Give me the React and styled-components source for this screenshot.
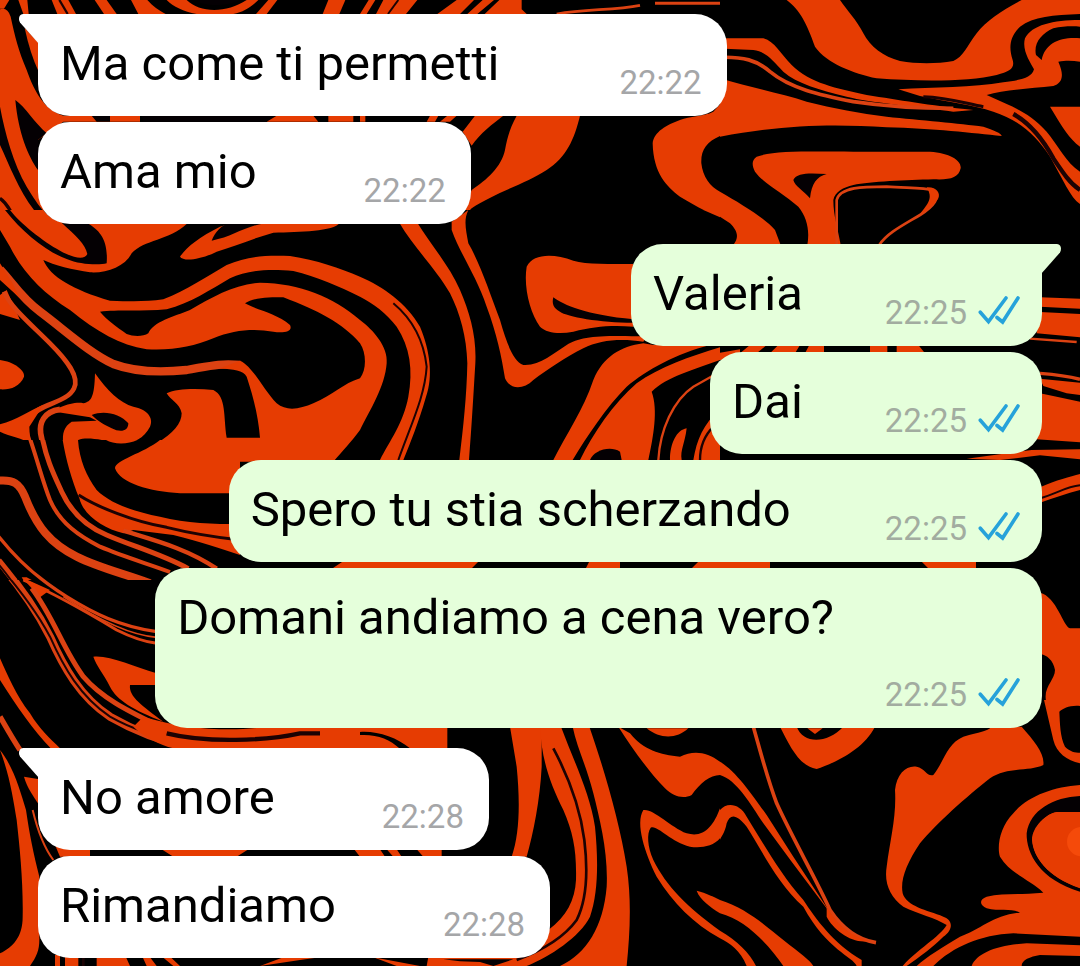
import React from "react";
import styled, { createGlobalStyle } from "styled-components";

const GlobalStyle = createGlobalStyle`
  *, *::before, *::after { box-sizing: border-box; }
  body {
    margin: 0;
    background: #000;
    font-family: Roboto, "Liberation Sans", sans-serif;
  }
`;

const Page = styled.main`
  display: grid;
  grid-template-columns: minmax(0, 1fr);
  min-height: 100vh;
  overflow: hidden;
`;

const WallpaperArt = styled.svg`
  grid-area: 1 / 1;
  display: block;
  width: 100%;
  height: 100%;
  background: #000;
  .o { fill: #e63c02; }
  .k { fill: #040003; }
  .lo { fill: none; stroke: #dc4212; }
  .lk { fill: none; stroke: #1c0203; }
`;

const Thread = styled.ol`
  grid-area: 1 / 1;
  z-index: 1;
  list-style: none;
  margin: 0;
  padding: 14px 38px 8px;
  display: flex;
  flex-direction: column;
  gap: 20px;
`;

const Group = styled.li`
  display: flex;
  flex-direction: column;
  align-items: ${(p) => (p.$out ? "flex-end" : "flex-start")};
  gap: 6px;
`;

const Bubble = styled.article`
  position: relative;
  display: flex;
  flex-direction: ${(p) => (p.$stacked ? "column" : "row")};
  align-items: flex-end;
  gap: ${(p) => (p.$stacked ? 0 : p.$gap)}px;
  max-width: 100%;
  padding: 21px ${(p) => (p.$out ? 22 : 25)}px 13px 22px;
  border-radius: 32px;
  border-top-left-radius: ${(p) => (p.$tail && !p.$out ? 0 : 32)}px;
  border-top-right-radius: ${(p) => (p.$tail && p.$out ? 0 : 32)}px;
  background: ${(p) => (p.$out ? "#e5ffdb" : "#fff")};
  color: ${(p) => (p.$out ? "#a2aca0" : "#a5a6a8")};
`;

const Text = styled.p`
  margin: 0;
  padding: 0 ${(p) => (p.$stacked ? 186 : 0)}px ${(p) => (p.$stacked ? 28 : 10)}px 0;
  font-size: 49px;
  line-height: 58px;
  color: #000;
`;

const Meta = styled.span`
  display: flex;
  align-items: center;
  gap: 11px;
  height: 40px;
`;

const Time = styled.time`
  font-size: 33px;
  line-height: 40px;
`;

const TailSvg = styled.svg`
  position: absolute;
  top: 0;
  left: ${(p) => (p.$out ? "auto" : "-19px")};
  right: ${(p) => (p.$out ? "-19px" : "auto")};
  transform: ${(p) => (p.$out ? "scaleX(-1)" : "none")};
  fill: ${(p) => (p.$out ? "#e5ffdb" : "#fff")};
`;

const TicksSvg = styled.svg`
  display: block;
  fill: none;
  stroke: #26a2da;
  stroke-width: 3.6;
  stroke-linecap: round;
`;

function Tail({ out }) {
  return (
    <TailSvg $out={out} width="20" height="30" viewBox="0 0 20 30" aria-hidden="true">
      <path d="M4 0H20V30L1 8.5C-1 5 0 0 4 0Z" />
    </TailSvg>
  );
}

function Ticks() {
  return (
    <TicksSvg width="42" height="34" viewBox="0 1 42 34" role="img" aria-label="Letto">
      <path d="M2.3 17.2L10.5 26.6L28 3" />
      <path d="M19 22.5L24.6 27L40 3" />
    </TicksSvg>
  );
}

/* One tile of the wallpaper, drawn at three units to the pixel. */
function Patch({ x, y, w, h, from = 0, children }) {
  return (
    <svg x={x} y={y} width={w} height={h} viewBox={`0 ${from} ${w * 3} ${h * 3}`}>
      {children}
    </svg>
  );
}

const O = ({ d }) => <path className="o" d={d} />;
const K = ({ d }) => <path className="k" d={d} />;
const LO = ({ d, w }) => <path className="lo" d={d} strokeWidth={w} />;
const LK = ({ d, w }) => <path className="lk" d={d} strokeWidth={w} />;

function Wallpaper() {
  return (
    <WallpaperArt viewBox="0 0 1080 966" preserveAspectRatio="xMidYMid slice" aria-hidden="true">
      <Patch x={0} y={0} w={360} h={210}>
        <O d="M0 28Q22 20 32 50C45 110 55 150 80 210C105 280 135 330 190 347H420V365H190L114 420V510L180 670H0V440L0 320Z" />
        <K d="M0 320C15 400 40 490 80 560C110 610 120 620 145 650L110 640C60 580 30 500 0 435Z" />
        <K d="M46 300C75 320 105 370 140 400L114 420V510C85 470 55 400 46 300Z" />
        <LK d="M0 595C15 605 25 620 35 640" w={10} />
        <LK d="M20 0L0 24" w={10} />
        <O d="M0 0H28L12 26H0Z" />
        <O d="M74 84L116 128V215Q90 160 74 84Z" />
        <O d="M55 0H82L86 42H70Z" />
        <O d="M155 0H205L228 42H172Z" />
        <LK d="M178 0L203 42" w={7} />
        <O d="M284 0H320L350 42H312Z" />
        <O d="M393 0H442C460 20 475 30 497 42H415Z" />
        <O d="M500 0H560C600 40 680 40 740 0H775C750 25 730 35 700 42H590C550 35 520 20 500 0Z" />
        <K d="M600 8C640 20 680 18 720 0H600Z" />
        <O d="M805 0H832L800 42H768Z" />
        <O d="M985 0H1036L1018 42H968Z" />
        <K d="M275 347H330V365H290Z" />
        <K d="M425 347H830L800 365H430Z" />
        <O d="M830 347H940L955 365H800Z M985 347H1060V365H985Z" />
      </Patch>

      <Patch x={360} y={0} w={360} h={210}>
        <O d="M26 0H46L20 42H0Z M70 0H172L138 42H48Z M290 0H342L300 42H232Z M368 0H402L352 42H322Z M418 0H485V28L500 42H374Z" />
        <LK d="M115 0L84 42" w={6} />
        <LO d="M590 42C680 26 760 32 840 16" w={8} />
        <LO d="M885 10H1080" w={9} />
        <O d="M0 347H16V365H0Z M210 347H235L225 365H200Z M262 347H290L270 365H240Z" />
        <O d="M345 347H430C400 370 360 400 335 437L308 395Z" />
        <O d="M470 347H660C642 420 620 470 560 510C500 550 400 580 335 625L300 660L335 570C380 540 425 500 435 450C442 410 452 380 470 347Z" />
        <O d="M1080 313L1060 335C1030 350 990 348 960 360C920 375 882 395 878 430C880 520 920 560 960 590C1010 620 1050 640 1080 655V575C1050 560 1028 530 1024 490C1022 450 1040 425 1080 408Z" />
      </Patch>

      <Patch x={720} y={0} w={360} h={360}>
        <O d="M15 115H130C165 125 180 160 215 195C270 250 350 265 440 285C540 300 620 315 760 330L700 335C600 320 450 308 380 290C300 270 230 250 190 215C160 185 140 155 100 150L15 146Z" />
        <LO d="M0 172C70 170 110 180 150 215C210 265 300 285 400 305C500 320 600 325 700 325" w={11} />
        <O d="M200 0C240 30 260 70 285 140C320 190 400 220 470 235C600 245 750 245 830 225C870 215 885 205 878 180C865 140 870 110 900 80C940 50 1000 45 1080 42V0H905C850 30 800 60 770 100C740 140 730 170 700 183C650 192 590 192 540 183C490 170 450 140 430 100C410 60 380 30 360 0Z" />
        <O d="M1080 60C1000 60 935 75 915 115C905 150 930 185 942 208C935 235 900 240 850 247C760 262 640 262 535 268L600 288C680 305 760 315 820 335C900 360 950 410 990 470C1030 540 1050 590 1080 612V515C1040 490 1010 430 980 395C940 350 900 330 860 312L800 285C850 270 930 265 1000 258C1025 250 1035 230 1015 185C1040 180 1060 182 1080 185V115C1020 110 975 130 965 180L948 165C940 130 965 100 1000 85C1030 78 1060 78 1080 80Z" />
        <LK d="M880 342C930 370 970 420 1000 475C1030 520 1050 550 1080 570" w={13} />
        <LK d="M610 290C680 292 730 308 790 320" w={9} />
        <O d="M990 320H1080V440C1050 420 1020 370 1005 345Z" />
        <O d="M0 235C90 262 180 280 260 305C340 325 420 340 500 350C600 360 720 370 790 380C820 390 845 400 845 408C760 400 640 385 500 382C350 372 200 372 0 410Z" />
        <O d="M110 470C160 452 250 455 400 455H630C690 460 725 480 722 505C715 535 690 540 640 538C560 540 450 545 400 555C370 562 345 575 340 600C340 650 355 690 362 735H262C270 690 260 650 235 620C190 580 130 550 105 515C95 495 95 480 110 470Z" />
        <K d="M220 540C230 515 280 520 320 522C290 530 275 550 270 595C250 570 225 560 220 540Z" />
        <LO d="M350 735V600C360 560 430 560 500 560C560 565 610 560 640 572C665 590 640 620 600 645C550 675 500 700 478 735" w={8} />
        <O d="M620 562C650 560 662 580 655 595C645 610 625 630 600 642C625 610 640 595 620 562Z" />
        <O d="M0 575C60 610 130 650 165 690L182 735H40C60 710 50 690 30 670L0 650Z" />
        <O d="M960 892L1080 896V926L960 920Z M960 936L1080 942V1012L950 1000Z" />
        <LO d="M930 1016L1070 1026" w={7} />
        <O d="M90 1035H140L110 1060H60Z M175 1035H240L225 1060H150Z M268 1035H312V1060H255Z M450 1035H502V1060H450Z M530 1035H595L615 1060H530Z" />
        <O d="M0 1058L60 1048V1080H0Z" />
      </Patch>

      <Patch x={0} y={210} w={360} h={290}>
        <O d="M0 0H130C160 40 200 42 250 42H560C510 90 430 90 395 130C375 170 320 190 270 187C220 180 160 165 130 150C150 200 220 240 330 272C400 275 440 275 490 268C560 240 620 200 680 165C740 140 790 135 870 138C950 150 1020 175 1080 200V260C1020 230 950 200 880 183C800 175 740 182 690 205C630 240 570 280 500 298C430 305 350 298 300 305C320 330 350 350 380 372C400 380 430 380 445 370C460 335 520 320 570 300C640 260 700 225 780 218C900 220 1000 260 1080 330V400C1030 340 950 300 850 262C810 262 760 262 735 280C770 300 830 310 870 345C880 365 850 370 820 365C760 355 700 360 640 385C580 410 520 422 440 418C360 405 290 365 210 300C130 250 70 190 30 110L0 60Z" />
        <K d="M185 38H260C300 60 325 90 320 160C300 165 240 165 200 147C140 125 70 70 15 0L30 0C60 40 130 95 180 122C220 145 255 150 262 132C255 100 230 80 185 38Z" />
        <LO d="M0 178C40 220 60 260 120 305C200 365 270 430 340 462C400 485 480 488 560 480C620 470 660 458 720 465" w={25} />
        <O d="M0 160L35 215L60 265L0 210Z M0 255L20 240L60 330L0 312Z" />
        <LO d="M12 245C30 290 90 340 150 400C200 450 240 500 222 535C200 580 120 580 92 620C70 650 80 670 90 700" w={14} />
        <O d="M0 450C40 455 75 480 72 500C60 530 30 540 0 538Z" />
        <O d="M0 643C50 630 90 600 130 585L88 650L90 700C70 685 30 680 0 665Z" />
        <O d="M285 490C320 540 360 580 400 590C450 600 460 630 450 650C430 690 390 705 350 700C310 690 260 680 235 690L233 700H190C186 670 192 650 215 635L290 632L270 622L170 606C150 600 220 572 250 580C275 575 283 560 285 490Z" />
        <LO d="M180 598C130 605 118 640 122 670L128 700" w={17} />
        <K d="M275 615C310 600 360 610 385 640C385 665 360 668 335 655C315 645 295 635 275 615Z" />
        <O d="M500 550C530 535 590 535 640 540C680 560 670 620 680 683H780C775 620 760 560 740 500C730 480 700 480 660 475L720 452C760 470 790 540 830 580C860 605 900 597 940 580C1000 555 1030 520 1080 505V660C1050 700 1030 720 1000 755H690V850H540C450 845 370 820 340 770C360 750 420 730 470 700C520 670 545 640 545 610C540 580 510 570 500 550Z" />
        <O d="M540 140C560 110 600 80 660 50L700 38H1020C1000 65 900 65 820 68C760 85 700 110 650 125C600 150 550 155 540 140Z" />
        <K d="M635 92C645 65 665 45 690 38H800C730 50 700 80 635 92Z" />
      </Patch>

      <Patch x={360} y={210} w={360} h={260}>
        <O d="M118 38H172C210 100 270 170 300 240C330 310 350 380 346 460C340 560 335 650 327 750H298C310 650 320 560 322 460C320 380 300 310 270 250C230 180 160 110 118 38Z" />
        <O d="M275 35L325 0C310 30 318 60 325 100C360 160 390 250 420 330C440 400 460 455 490 465C540 468 580 430 620 405C660 380 720 375 860 380L850 395C780 385 720 390 670 415C620 440 560 480 520 510C490 540 450 540 435 505C425 440 410 370 380 290C350 200 300 130 275 60Z" />
        <O d="M500 170C520 130 580 130 640 152C680 165 750 160 820 162V350C750 345 700 350 640 365C600 372 560 370 540 350C510 310 490 230 500 170Z" />
        <K d="M580 262C610 285 680 315 820 328V338C720 338 620 320 600 305C580 295 575 280 580 262Z" />
        <O d="M0 200C70 230 140 280 180 350C210 420 220 500 198 560C175 640 150 700 130 750H60C90 690 130 640 145 560C160 480 150 410 110 350C80 310 40 280 0 260Z" />
        <LK d="M100 280C160 330 192 400 200 470C195 560 150 650 115 750" w={6} />
        <O d="M0 330C40 360 85 410 80 460C75 530 30 600 0 660V505C20 480 20 430 0 400Z" />
        <O d="M580 750C620 670 670 600 700 510C730 440 780 410 850 400L880 405H1050C950 430 860 480 800 530C740 590 680 680 638 750Z" />
        <O d="M660 750C700 670 760 580 830 520C900 470 990 440 1080 412V450C1000 480 920 500 875 545C895 600 880 680 865 750Z" />
        <K d="M690 750C700 722 750 705 780 725L785 750Z" />
        <LO d="M895 750C900 660 940 570 1000 530L1080 485" w={7} />
        <O d="M930 750C930 700 950 660 980 655C975 700 960 720 965 750Z M1000 750C1010 690 1030 640 1080 600V750Z" />
        <LK d="M1020 750C1020 710 1030 680 1060 650" w={7} />
        <O d="M1030 0H1080V22Z" />
      </Patch>

      <Patch x={0} y={500} w={360} h={466}>
        <LO d="M200 0C240 60 300 90 380 120C450 145 500 160 570 205" w={15} />
        <O d="M500 65C580 75 650 75 700 72V165C640 150 560 110 500 100Z" />
        <LO d="M0 115C60 190 120 240 200 290C280 340 360 380 470 395" w={10} />
        <LO d="M70 240C150 275 250 330 350 390C400 415 430 425 470 430" w={9} />
        <LO d="M190 290C280 350 380 405 470 412" w={5} />
        <O d="M65 232L150 270L120 292Z" />
        <LO d="M0 190C60 260 110 330 150 410C190 500 240 590 330 650C400 690 470 720 560 738" w={24} />
        <LK d="M0 200C60 270 110 335 150 410C190 500 240 590 330 650C400 690 470 712 560 725" w={6} />
        <LO d="M95 265C160 350 190 450 250 530C310 600 400 640 490 685" w={15} />
        <O d="M280 470C330 465 400 500 470 520V555H390C385 590 430 620 490 665C400 630 350 600 330 560C310 520 290 500 280 470Z" />
        <O d="M430 650C560 690 700 695 800 680H1080V745H520C480 735 430 710 400 680Z" />
        <LK d="M500 700C620 730 800 722 900 700H960" w={13} />
        <O d="M0 475C20 520 50 590 90 640C120 690 150 715 180 745H152C100 690 50 620 0 540Z" />
        <LO d="M0 650C20 685 40 720 60 750" w={16} />
        <O d="M0 750C30 830 40 900 50 960C60 1050 70 1150 68 1250C68 1310 40 1340 0 1360V1398H90C110 1370 118 1350 118 1320V1130C100 1060 88 1000 78 930C60 870 40 800 0 750Z" />
        <O d="M72 830L118 838V915C100 890 80 860 72 830Z" />
        <LO d="M98 930C110 980 130 1040 160 1080" w={6} />
        <O d="M165 1035L270 1050V1070H180Z M480 1045H750L710 1070H520Z M1060 1045H1080V1070Z" />
        <O d="M165 1365H180V1398H165Z M195 1365H235V1398H195Z M290 1365H375L390 1398H290Z M425 1365H445L470 1398H440Z M480 1365H505L540 1398H520Z M780 1398L850 1372H960L900 1380Z" />
        <LK d="M250 1365V1398" w={8} />
      </Patch>

      <Patch x={0} y={440} w={240} h={140}>
        <rect width="720" height="420" fill="#000" />
        <LO d="M88 -10C115 70 130 130 150 180C180 250 240 290 300 320C370 350 440 370 510 396" w={12} />
        <LO d="M126 -10C140 60 160 100 185 155C215 220 260 260 320 285C400 320 480 340 565 386" w={15} />
        <O d="M188 0H234C238 60 260 110 290 150C330 190 400 215 480 230C560 250 640 252 720 252V345C660 325 600 305 520 285L400 270L370 280C310 265 250 225 238 175C215 120 198 60 188 0Z" />
        <LK d="M236 165C290 200 400 245 500 262C580 282 650 292 720 300" w={9} />
        <LO d="M370 272C460 300 560 325 650 386" w={13} />
        <LO d="M-5 122C40 118 58 130 75 170C110 260 150 310 230 350C300 385 370 400 450 430" w={24} />
        <O d="M480 0C430 40 345 60 345 85C360 130 450 155 540 160H720V0Z M318 0C340 14 385 14 412 0Z" />
        <LO d="M-5 288C40 345 80 385 135 425" w={10} />
        <LO d="M-5 362C10 380 25 400 45 425" w={20} />
        <LK d="M-5 372C10 390 22 405 36 425" w={6} />
        <O d="M65 412L80 412L95 420H70Z" />
      </Patch>

      <Patch x={360} y={700} w={360} h={266}>
        <O d="M0 80H262V145H150C110 112 50 92 0 96Z M0 105C50 102 90 118 118 145H0Z" />
        <O d="M450 80H545V200C540 300 520 400 500 470H455C480 400 480 300 470 200Z" />
        <O d="M540 80H603C640 180 690 280 705 380C715 480 715 580 690 650C660 710 570 770 500 798H200L205 770H480C540 760 560 730 565 690C620 650 645 600 648 540C650 450 640 400 610 330C570 250 545 180 540 80Z" />
        <LK d="M580 145C620 220 660 320 673 420C685 520 680 600 650 660C610 715 550 750 470 780" w={8} />
        <K d="M250 778H460L400 798L360 786L300 784Z" />
        <O d="M638 80H688C730 200 780 370 800 500C815 600 810 700 800 798H600C680 760 730 680 740 560C745 460 720 360 700 280C680 200 650 140 638 80Z" />
        <O d="M775 80L810 100C850 150 900 165 960 170C1000 150 1040 155 1080 185V225C1050 225 1020 250 995 285C970 298 940 290 915 265C870 220 820 150 775 80Z M860 85H985C950 118 900 118 860 85Z" />
        <O d="M850 330C880 325 930 380 980 400C1030 415 1060 380 1080 325V415C1060 440 1020 445 990 440C930 425 890 372 872 383C860 400 862 440 880 480C920 560 980 620 1080 692V715C1000 670 940 610 890 530C855 460 825 370 850 330Z" />
        <O d="M1010 572C1040 580 1060 590 1080 600V640C1050 620 1020 600 1010 572Z" />
        <O d="M0 448H60L75 470H0Z M80 448H110L125 470H100Z M170 448H245V470H190Z M40 772L180 798H110Z" />
      </Patch>

      <Patch x={720} y={700} w={360} h={266}>
        <O d="M0 185C50 215 100 290 140 345L220 470L335 645L215 485L130 370C90 310 50 240 0 225Z" />
        <LO d="M100 80C120 150 140 230 170 310C220 420 290 540 330 630C370 690 420 720 468 728" w={11} />
        <O d="M320 620C350 670 390 710 450 722C400 735 340 690 320 650Z" />
        <O d="M0 330C20 305 60 310 80 350C130 430 180 520 250 600C290 660 340 730 425 780V798H410C400 770 320 750 250 620C170 550 120 440 80 380C50 342 30 340 20 370C15 400 0 415 0 420Z" />
        <O d="M180 80H230C250 132 320 132 370 80H465C430 150 340 190 290 207C240 200 210 140 180 80Z M262 85H308L285 102Z" />
        <O d="M0 600C80 625 140 680 190 720C240 760 270 780 280 798H190C150 740 80 660 0 640Z M0 692C50 720 90 760 108 798H80C60 750 30 730 0 715Z" />
        <O d="M640 225C670 190 680 130 730 110C780 95 800 95 815 80H905C940 120 975 160 970 195C930 215 860 200 810 235C740 290 650 370 600 430C560 490 540 540 548 580C560 620 620 630 670 650C700 660 700 690 670 710C640 740 600 770 560 798H548C590 750 660 710 680 675C650 655 590 640 550 620C510 590 492 550 500 500C510 420 530 350 525 270C530 220 560 195 590 200C615 205 620 230 640 225Z" />
        <O d="M972 0H1080V18C1050 15 1030 25 1018 35C1020 70 1020 110 1035 140C1050 155 1065 158 1080 158V190C1040 180 1010 160 1000 120Z" />
        <O d="M1080 255C1000 260 920 290 880 340C840 380 830 440 840 470C870 520 930 540 970 578C900 585 850 578 800 590C775 600 780 615 800 625C840 635 880 625 900 638C820 645 780 690 720 710C670 740 620 770 590 798H640C700 740 780 705 880 700L1080 710Z" />
        <K d="M1080 288C1000 292 930 330 920 400C918 460 960 540 1080 575V565C980 530 940 470 936 420C936 380 980 340 1010 336H1080Z" />
        <O d="M1010 337H1080V564C980 530 940 470 937 420C940 380 980 340 1010 337Z" />
        <circle cx="1085" cy="425" r="44" fill="#f54a0a" />
        <O d="M755 798C770 760 830 735 920 730L1080 736V768L960 765C930 770 905 780 905 798Z" />
      </Patch>

      <Patch x={960} y={360} w={120} h={340} from={240}>
        <LO d="M240 280C290 284 330 290 360 298" w={10} />
        <O d="M240 296L360 308V345L320 340L250 318Z M240 340L290 350L360 365V487L230 478Z M20 536L215 510L360 508V538L240 526L120 540Z" />
        <O d="M240 622C290 600 330 590 360 582V630C320 640 280 655 240 668Z" />
        <LK d="M240 655C290 640 320 620 360 616" w={6} />
        <O d="M0 845H48V864H0Z M240 938C290 950 310 1040 330 1045H360V1275L300 1290V1262H258C250 1220 285 1200 285 1170C280 1140 260 1125 240 1122Z" />
      </Patch>

      <path className="o" d="M345 560H480L470 570H330ZM590 560H620V570H585ZM700 560H770V570H690ZM920 560H960V570H930Z" />
    </WallpaperArt>
  );
}

const groups = [
  {
    out: false,
    messages: [
      { text: "Ma come ti permetti", time: "22:22", gap: 120 },
      { text: "Ama mio", time: "22:22", gap: 107 },
    ],
  },
  {
    out: true,
    messages: [
      { text: "Valeria", time: "22:25", gap: 82 },
      { text: "Dai", time: "22:25", gap: 82 },
      { text: "Spero tu stia scherzando", time: "22:25", gap: 94 },
      { text: "Domani andiamo a cena vero?", time: "22:25", stacked: true },
    ],
  },
  {
    out: false,
    messages: [
      { text: "No amore", time: "22:28", gap: 107 },
      { text: "Rimandiamo", time: "22:28", gap: 107 },
    ],
  },
];

export default function App() {
  return (
    <Page>
      <GlobalStyle />
      <Wallpaper />
      <Thread>
        {groups.map((group, g) => (
          <Group key={g} $out={group.out}>
            {group.messages.map((m, i) => (
              <Bubble key={m.text} $out={group.out} $tail={i === 0} $stacked={m.stacked} $gap={m.gap}>
                {i === 0 && <Tail out={group.out} />}
                <Text $stacked={m.stacked}>{m.text}</Text>
                <Meta>
                  <Time dateTime={m.time}>{m.time}</Time>
                  {group.out && <Ticks />}
                </Meta>
              </Bubble>
            ))}
          </Group>
        ))}
      </Thread>
    </Page>
  );
}
